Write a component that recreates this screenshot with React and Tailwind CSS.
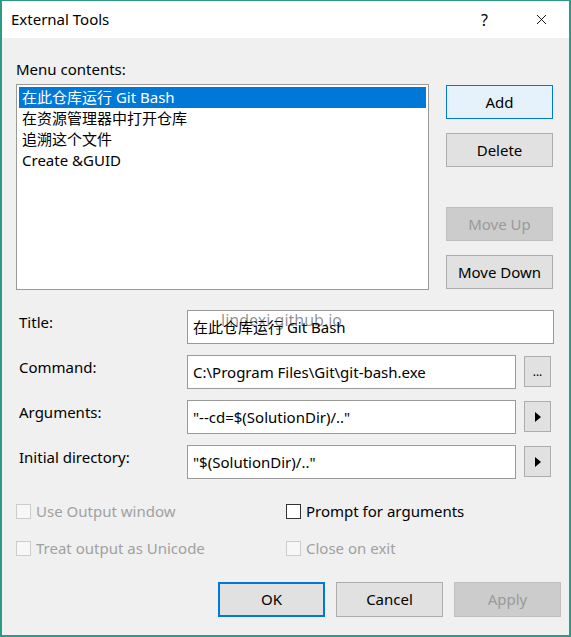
import { X } from "lucide-react";

const FONT = { fontFamily: '"Noto Sans", "Noto Sans CJK SC", sans-serif' };

const items = ["在此仓库运行 Git Bash", "在资源管理器中打开仓库", "追溯这个文件", "Create &GUID"];

function Btn({ children, variant = "normal", className = "" }) {
  const look =
    variant === "primary"
      ? "border-[#0078d7] bg-[#e5f1fb] text-black"
      : variant === "default"
      ? "border-[#0078d7] border-2 bg-[#e1e1e1] text-black"
      : variant === "disabled"
      ? "border-[#bfbfbf] bg-[#cccccc] text-[#9a9a9a]"
      : "border-[#adadad] bg-[#e1e1e1] text-black";
  return (
    <div className={`flex items-center justify-center border text-[15px] ${look} ${className}`}>
      {children}
    </div>
  );
}

function Field({ label, value, wide, side, watermark }) {
  return (
    <div className="flex h-[34px] items-start">
      <span className="mt-[2px] w-[171px] shrink-0 pl-[3px] text-[15px] leading-[20px]">{label}</span>
      <div
        className={`relative flex h-full items-center border border-[#9a9a9a] bg-white px-[5px] text-[15px] ${
          wide ? "w-[367px]" : "w-[329px]"
        }`}
      >
        <span>{value}</span>
        {watermark && (
          <span className="pointer-events-none absolute left-[33px] top-[-3px] text-[16px] text-black/45">
            lindexi.github.io
          </span>
        )}
      </div>
      {side && (
        <div className="ml-[8px] mt-[1px] flex h-[31px] w-[27px] items-center justify-center border border-[#adadad] bg-[#e1e1e1] text-[12px]">
          {side === "dots" ? (
            <span className="leading-none">...</span>
          ) : (
            <svg width="8" height="10" viewBox="0 0 8 10">
              <path d="M1 0 L7 5 L1 10 Z" fill="#000" />
            </svg>
          )}
        </div>
      )}
    </div>
  );
}

function Check({ label, disabled }) {
  return (
    <div className="flex h-[20px] items-center">
      <span
        className={`h-[15px] w-[15px] border ${
          disabled ? "border-[#cccccc] bg-[#f7f7f7]" : "border-[#333333] bg-white"
        }`}
      />
      <span className={`ml-[5px] text-[15px] ${disabled ? "text-[#a0a0a0]" : "text-black"}`}>{label}</span>
    </div>
  );
}

export default function App() {
  return (
    <div
      style={FONT}
      className="flex h-[637px] w-[571px] flex-col border-x-2 border-b-2 border-t border-[#2b9a87] text-black"
    >
      {/* Title bar */}
      <div className="flex h-[37px] shrink-0 items-center bg-white pl-[9px]">
        <span className="text-[15px]">External Tools</span>
        <span className="ml-auto text-[16px]">?</span>
        <X className="ml-[45px] mr-[19px] h-[17px] w-[17px]" strokeWidth={1.3} />
      </div>

      {/* Body */}
      <div className="flex flex-1 flex-col bg-[#f0f0f0] pl-[14px] pt-[21px]">
        <div className="h-[20px] text-[15px] leading-[20px]">Menu contents:</div>

        <div className="mt-[5px] flex">
          <div className="h-[206px] w-[413px] border border-[#9a9a9a] bg-white p-[2px]">
            {items.map((t, i) => (
              <div
                key={t}
                className={`flex h-[21px] items-center px-[3px] text-[15px] ${
                  i === 0 ? "bg-[#0078d7] text-white" : ""
                }`}
              >
                {t}
              </div>
            ))}
          </div>
          <div className="ml-[17px] flex w-[107px] flex-col">
            <Btn variant="primary" className="mt-[1px] h-[34px]">Add</Btn>
            <Btn className="mt-[14px] h-[34px]">Delete</Btn>
            <Btn variant="disabled" className="mt-[40px] h-[34px]">Move Up</Btn>
            <Btn className="mt-[14px] h-[34px]">Move Down</Btn>
          </div>
        </div>

        <div className="mt-[20px] flex flex-col gap-[11px]">
          <Field label="Title:" value="在此仓库运行 Git Bash" wide watermark />
          <Field label="Command:" value="C:\Program Files\Git\git-bash.exe" side="dots" />
          <Field label="Arguments:" value={'"--cd=$(SolutionDir)/.."'} side="arrow" />
          <Field label="Initial directory:" value={'"$(SolutionDir)/.."'} side="arrow" />
        </div>

        <div className="mt-[22px] grid grid-cols-[270px_1fr] gap-y-[17px]">
          <Check label="Use Output window" disabled />
          <Check label="Prompt for arguments" />
          <Check label="Treat output as Unicode" disabled />
          <Check label="Close on exit" disabled />
        </div>

        <div className="mt-[24px] flex gap-[11px] pl-[202px]">
          <Btn variant="default" className="h-[35px] w-[107px]">OK</Btn>
          <Btn className="h-[35px] w-[107px]">Cancel</Btn>
          <Btn variant="disabled" className="h-[35px] w-[107px]">Apply</Btn>
        </div>
      </div>
    </div>
  );
}
